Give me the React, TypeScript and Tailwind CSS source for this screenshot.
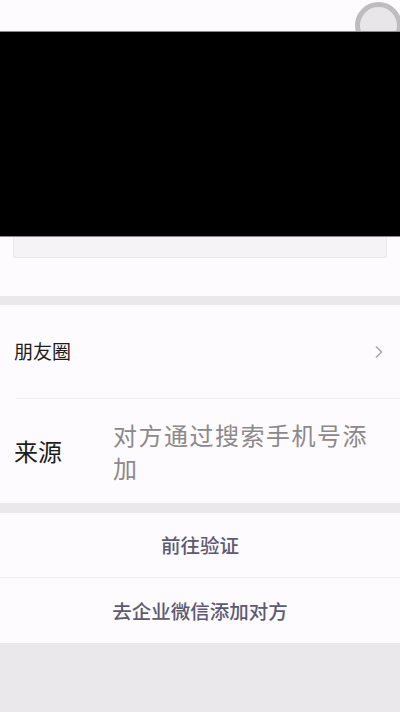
const FONT = { fontFamily: '"Noto Sans CJK SC", "Noto Sans", sans-serif' };

export default function App() {
  return (
    <div className="w-[400px] h-[712px] overflow-hidden bg-[#ebe8eb]" style={FONT}>
      <div className="relative bg-[#fdfbfd]">
        {/* 顶部头像圆圈（被黑色区域遮住一半） */}
        <div className="absolute right-[-2px] top-[2px] w-[47px] h-[47px] rounded-full border-[5px] border-[#bebcbe] bg-[#e8e6e8]" />
        <div className="h-[31px]" />
        <div className="relative h-[206px] bg-black border-y border-[#8a8a8a]" />
        <div className="mx-[13px] h-[21px] rounded-b-[3px] border-x border-b border-[#e9e6e9] bg-[#f6f3f6]" />
        <div className="h-[38px]" />
      </div>

      <div className="h-[9px]" />

      <div className="bg-[#fdfbfd]">
        <div className="flex items-center justify-between h-[93px] pl-[14px] pr-[16px]">
          <span className="text-[19px] text-[#1c1c1c]">朋友圈</span>
          <svg width="10" height="14" viewBox="0 0 10 14" fill="none">
            <path d="M2 1.5 L7.5 7 L2 12.5" stroke="#a9a7a9" strokeWidth="1.6" />
          </svg>
        </div>
        <div className="ml-[16px] h-px bg-[#efecef]" />
        <div className="flex items-center h-[104px] pl-[14px] pr-[10px]">
          <span className="w-[99px] shrink-0 text-[24px] text-[#1c1c1c]">来源</span>
          <span className="text-[24px] leading-[33px] tracking-[1.5px] text-[#8b898b]">
            对方通过搜索手机号添加
          </span>
        </div>
      </div>

      <div className="h-[10px]" />

      <div className="bg-[#fdfbfd]">
        <div className="flex items-center justify-center h-[64px] text-[19.5px] font-medium text-[#5c5a72]">
          前往验证
        </div>
        <div className="h-px bg-[#efecef]" />
        <div className="flex items-center justify-center h-[65px] text-[19.5px] font-medium text-[#5c5a72]">
          去企业微信添加对方
        </div>
      </div>
    </div>
  );
}
